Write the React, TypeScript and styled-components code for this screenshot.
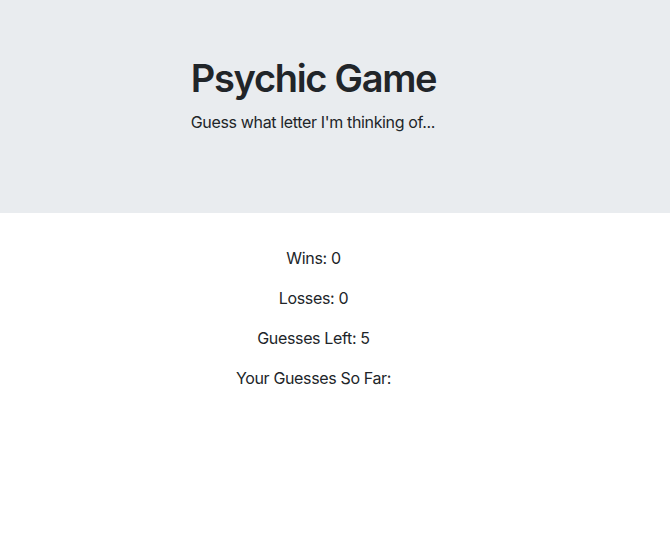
import React from "react";
import styled, { createGlobalStyle } from "styled-components";

const Global = createGlobalStyle`
  html, body { margin: 0; padding: 0; background: #fff; }
  body {
    font-family: Inter, "Noto Sans", sans-serif;
    color: #212529;
    font-size: 16px;
    line-height: 1.5;
    letter-spacing: -0.35px;
  }
`;

const Jumbotron = styled.header`
  background: #e9ecef;
  padding: 56px 0 63px;
  margin-bottom: 33px;
`;

const Column = styled.div`
  width: 627px;
  display: flex;
  flex-direction: column;
  align-items: center;
`;

const TitleBlock = styled.div`
  text-align: left;
`;

const Title = styled.h1`
  margin: 0 0 8px;
  font-size: 38px;
  font-weight: 560;
  line-height: 1.2;
  letter-spacing: -1.3px;
`;

const Lead = styled.p`
  margin: 0 0 16px;
  font-size: 16px;
  font-weight: 400;
`;

const Stat = styled.p`
  margin: 0 0 16px;
  text-align: center;
`;

export default function App() {
  return (
    <>
      <Global />
      <Jumbotron>
        <Column>
          <TitleBlock>
            <Title>Psychic Game</Title>
            <Lead>Guess what letter I'm thinking of...</Lead>
          </TitleBlock>
        </Column>
      </Jumbotron>
      <Column>
        <Stat>Wins: 0</Stat>
        <Stat>Losses: 0</Stat>
        <Stat>Guesses Left: 5</Stat>
        <Stat>Your Guesses So Far:</Stat>
      </Column>
    </>
  );
}
